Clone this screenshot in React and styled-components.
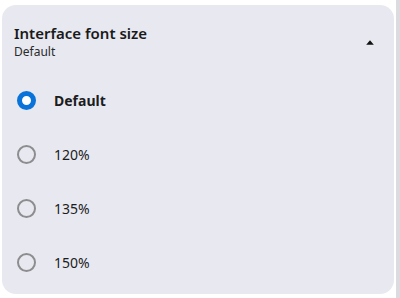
import React, { useState } from "react";
import styled, { createGlobalStyle } from "styled-components";

const GlobalStyle = createGlobalStyle`
  html, body {
    margin: 0;
    padding: 0;
    background: #ffffff;
  }
  body {
    font-family: "Noto Sans", "Open Sans", Arial, sans-serif;
    color: #1c1c1e;
  }
`;

const Page = styled.div`
  width: 400px;
  height: 298px;
  display: flex;
  align-items: flex-start;
  box-sizing: border-box;
  padding: 5px 0 0 2px;
`;

const Card = styled.section`
  flex: 1;
  height: 289px;
  background: #e8e9f0;
  border-radius: 14px;
  display: flex;
  flex-direction: column;
  box-sizing: border-box;
`;

const ScrollStrip = styled.div`
  width: 4px;
  height: 298px;
  margin-top: -5px;
  margin-left: 2px;
  background: #dcdce0;
`;

const Header = styled.div`
  display: flex;
  justify-content: space-between;
  align-items: center;
  padding: 18px 20px 0 12px;
`;

const HeaderText = styled.div`
  display: flex;
  flex-direction: column;
`;

const Title = styled.h3`
  margin: 0;
  font-size: 15px;
  line-height: 20px;
  font-weight: 600;
  color: #1a1a1a;
`;

const Subtitle = styled.span`
  margin-top: 1px;
  font-size: 12px;
  line-height: 16px;
  color: #2a2a2a;
`;

const Caret = styled.svg`
  width: 8px;
  height: 5px;
  display: block;
  margin-top: 2px;
`;

const Options = styled.ul`
  list-style: none;
  margin: 13px 0 0;
  padding: 0;
`;

const Option = styled.li`
  height: 54px;
  display: flex;
  align-items: center;
  padding-left: 15px;
  cursor: pointer;
`;

const Radio = styled.span`
  width: 19px;
  height: 19px;
  box-sizing: border-box;
  border-radius: 50%;
  border: ${(p) => (p.$checked ? "5.5px solid #0a73d9" : "2px solid #8d8d90")};
  background: ${(p) => (p.$checked ? "#ffffff" : "transparent")};
  flex-shrink: 0;
`;

const Label = styled.span`
  margin-left: 18px;
  font-size: 14px;
  font-weight: ${(p) => (p.$checked ? 700 : 400)};
  color: #1c1c1e;
`;

const sizes = ["Default", "120%", "135%", "150%"];

const App = () => {
  const [selected, setSelected] = useState("Default");

  return (
    <>
      <GlobalStyle />
      <Page>
        <Card>
          <Header>
            <HeaderText>
              <Title>Interface font size</Title>
              <Subtitle>{selected}</Subtitle>
            </HeaderText>
            <Caret viewBox="0 0 8 5">
              <path d="M4 0.3 L7.8 4.7 L0.2 4.7 Z" fill="#111" />
            </Caret>
          </Header>
          <Options>
            {sizes.map((s) => (
              <Option key={s} onClick={() => setSelected(s)}>
                <Radio $checked={s === selected} />
                <Label $checked={s === selected}>{s}</Label>
              </Option>
            ))}
          </Options>
        </Card>
        <ScrollStrip />
      </Page>
    </>
  );
};

export default App;
